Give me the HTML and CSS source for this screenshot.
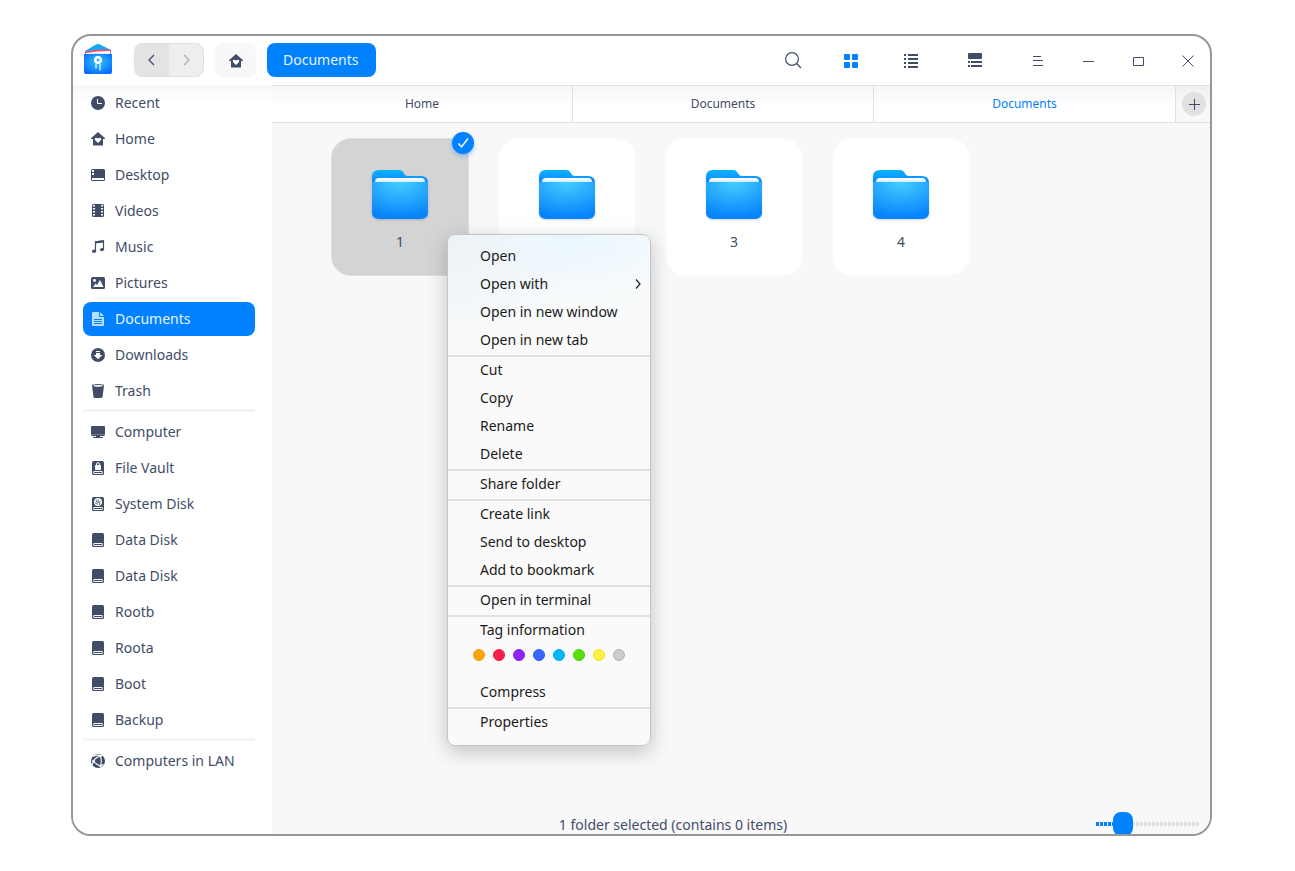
FILE: index.html
```html
<!DOCTYPE html>
<html lang="en">
<head>
<meta charset="utf-8">
<title>Documents</title>
<link rel="stylesheet" href="styles.css">
</head>
<body>
<svg class="defs" aria-hidden="true">
  <defs>
    <linearGradient id="folder-back" x1="0" y1="0" x2="0" y2="1">
      <stop offset="0" stop-color="#0ab2ff"/><stop offset=".25" stop-color="#0f88f8"/><stop offset="1" stop-color="#0a84ff"/>
    </linearGradient>
    <radialGradient id="folder-front" cx=".5" cy="0" r="1">
      <stop offset="0" stop-color="#46cdff"/><stop offset="1" stop-color="#0583fb"/>
    </radialGradient>
    <linearGradient id="paper" x1="0" y1="0" x2="0" y2="1">
      <stop offset="0" stop-color="#fff"/><stop offset="1" stop-color="#c4e8fd"/>
    </linearGradient>
    <radialGradient id="logo-front" cx=".5" cy=".4" r=".75">
      <stop offset="0" stop-color="#2fc4ff"/><stop offset="1" stop-color="#0060ff"/>
    </radialGradient>
    <symbol id="folder" viewBox="0 0 58 52">
      <path d="M1 8q0-7 7-7h20q3 0 4 2l2 3q1 1 3 1h13q7 0 7 7v29q0 7-7 7H8q-7 0-7-7z" fill="url(#folder-back)"/>
      <path d="M4 14v-1q0-4 4-4h42q4 0 4 4v1z" fill="url(#paper)"/>
      <path d="M1 13h56v29q0 7-7 7H8q-7 0-7-7z" fill="url(#folder-front)"/>
    </symbol>
    <symbol id="home" viewBox="0 0 16 16">
      <path d="M8 1l7 6.200V8h-2v6.500H3V8H1v-.8z" fill="currentColor"/>
      <path d="M8 12L5.200 9.200C4.200 8 5 6.700 6.200 6.700c.8 0 1.400.4 1.800 1 .4-.6 1-1 1.800-1 1.200 0 2 1.300 1 2.500z" fill="#fff"/>
    </symbol>
    <symbol id="disk" viewBox="0 0 16 16">
      <rect x="2" y="1" width="12" height="14" rx="1.500" fill="currentColor"/>
      <rect x="3.500" y="11.500" width="9" height="2" rx=".6" fill="none" stroke="#fff"/>
    </symbol>
  </defs>
</svg>

<div class="window">
  <header class="titlebar">
    <svg class="logo" viewBox="0 0 28 32" aria-hidden="true">
      <path d="M1 8L12 1.500q2-1 4 0L27 7v8H1z" fill="#14a9f5"/>
      <path d="M1 8.500Q13 6 26 6.500l1 4H1z" fill="#ff4d67"/>
      <path d="M2 10q12-2 24-2v4H2z" fill="#fff"/>
      <path d="M0 11q14-.5 28 0v18q0 2-2 2H2q-2 0-2-2z" fill="url(#logo-front)"/>
      <circle cx="14" cy="17" r="2.700" fill="#27b4ff" stroke="#fff" stroke-width="2.600"/>
      <path d="M12 21v4.500M16 21v6.500" stroke="#fff" stroke-width="1.200"/>
    </svg>
    <div class="history">
      <button class="history-button is-enabled" type="button" aria-label="Back"><svg width="16" height="16" viewBox="0 0 16 16"><path d="M10 3L5 8l5 5"/></svg></button>
      <button class="history-button" type="button" aria-label="Forward"><svg width="16" height="16" viewBox="0 0 16 16"><path d="M6 3l5 5-5 5"/></svg></button>
    </div>
    <button class="home-button" type="button" aria-label="Home"><svg width="16" height="16"><use href="#home"/></svg></button>
    <button class="crumb" type="button">Documents</button>
    <div class="tools">
      <button class="tool search" type="button" aria-label="Search"><svg width="18" height="18" viewBox="0 0 18 18" fill="none" stroke="currentColor" stroke-width="1.200"><circle cx="8" cy="7" r="6.400"/><path d="M12.500 11.500l4.500 4.500"/></svg></button>
      <button class="tool is-active" type="button" aria-label="Icon view"><svg width="14" height="14" viewBox="0 0 14 14" fill="currentColor"><rect width="6" height="6" rx="1"/><rect x="8" width="6" height="6" rx="1"/><rect y="8" width="6" height="6" rx="1"/><rect x="8" y="8" width="6" height="6" rx="1"/></svg></button>
      <button class="tool list" type="button" aria-label="List view"><svg width="14" height="14" viewBox="0 0 14 14" fill="currentColor"><path d="M0 0h2v2H0zM4 0h10v2H4zM0 4h2v2H0zM4 4h10v2H4zM0 8h2v2H0zM4 8h10v2H4zM0 12h2v2H0zM4 12h10v2H4z"/></svg></button>
      <button class="tool" type="button" aria-label="Details"><svg width="14" height="16" viewBox="0 0 14 16" fill="currentColor"><rect width="14" height="6" rx="1"/><path d="M0 8h2v2H0zM3 8h11v2H3zM0 12h2v2H0zM3 12h11v2H3z"/></svg></button>
    </div>
    <div class="controls">
      <button class="control" type="button" aria-label="Menu"><svg width="10" height="10" viewBox="0 0 10 10"><path d="M0 .5h8M0 4.500h10M0 9.500h10"/></svg></button>
      <button class="control" type="button" aria-label="Minimize"><svg width="11" height="11" viewBox="0 0 11 11"><path d="M0 5.500h11"/></svg></button>
      <button class="control" type="button" aria-label="Maximize"><svg width="11" height="9" viewBox="0 0 11 9"><path d="M.5.500h10v8H.5z"/></svg></button>
      <button class="control" type="button" aria-label="Close"><svg width="12" height="12" viewBox="0 0 12 12"><path d="M.5.500l11 11M11.500.500l-11 11"/></svg></button>
    </div>
  </header>

  <div class="body">
    <nav class="sidebar" aria-label="Places">
      <a class="place" href="#recent"><svg viewBox="0 0 16 16"><circle cx="8" cy="8" r="7" fill="currentColor"/><path d="M7.500 4v4.500H12" fill="none" stroke="#fff"/></svg>Recent</a>
      <a class="place" href="#home-folder"><svg viewBox="0 0 16 16"><use href="#home"/></svg>Home</a>
      <a class="place" href="#desktop"><svg viewBox="0 0 16 16"><rect x="1" y="2" width="14" height="12" rx="1.500" fill="currentColor"/><path d="M2 11h12v2H2zM2 3h2v2H2zM2 6h2v2H2z" fill="#fff"/></svg>Desktop</a>
      <a class="place" href="#videos"><svg viewBox="0 0 16 16"><rect x="2" y="1" width="12" height="13" rx="1.500" fill="currentColor"/><path d="M4 2v12M12 2v12" stroke="#fff" stroke-width="2" stroke-dasharray="1.600 1.400"/></svg>Videos</a>
      <a class="place" href="#music"><svg viewBox="0 0 16 16"><path d="M5.500 12V2.800L13.500 2v8.500" fill="none" stroke="currentColor" stroke-width="1.200"/><path d="M5 2.200l9-1v2.300l-9 1z" fill="currentColor"/><ellipse cx="4" cy="12.300" rx="2" ry="1.700" fill="currentColor"/><ellipse cx="12" cy="10.600" rx="2" ry="1.700" fill="currentColor"/></svg>Music</a>
      <a class="place" href="#pictures"><svg viewBox="0 0 16 16"><rect x="1" y="2" width="14" height="12" rx="1.500" fill="currentColor"/><circle cx="4.500" cy="5.500" r="1.400" fill="#fff"/><path d="M3 12l2.500-3.500L7 10l3-5 3.500 7z" fill="#fff"/></svg>Pictures</a>
      <a class="place is-current" href="#documents" aria-current="page"><svg viewBox="0 0 16 16"><path d="M3 1h6v5h5v8q0 1-1 1H3q-1 0-1-1V2q0-1 1-1zM10 1l4 4h-4z" fill="#b9dcff"/><path d="M4 8.500h8M4 10.500h8M4 12.500h8" stroke="#0081ff"/></svg>Documents</a>
      <a class="place" href="#downloads"><svg viewBox="0 0 16 16"><circle cx="8" cy="8" r="7" fill="currentColor"/><path d="M6 4h4v1H6zM6 6h4v2h2.300L8 12.300 3.700 8H6z" fill="#fff"/></svg>Downloads</a>
      <a class="place" href="#trash"><svg viewBox="0 0 16 16"><path d="M2 2.500Q2 1 8 1t6 1.500L12.500 14q-.2 1-1.500 1H5q-1.300 0-1.500-1z" fill="currentColor"/><ellipse cx="8" cy="2.800" rx="4.800" ry=".9" fill="#fff"/></svg>Trash</a>
      <hr class="rule">
      <a class="place" href="#computer"><svg viewBox="0 0 16 16"><path d="M2 2h12q1 0 1 1v7H1V3q0-1 1-1zM1 10.300h14q0 1.700-1 1.700H2q-1 0-1-1.700zM6 12h4v1H6z" fill="currentColor"/><path d="M3 13.500h10" stroke="currentColor"/></svg>Computer</a>
      <a class="place" href="#vault"><svg viewBox="0 0 16 16"><use href="#disk"/><rect x="5" y="5" width="6" height="5" rx=".6" fill="#fff"/><path d="M6.500 5.500V4q0-1.300 1.500-1.300T9.500 4v1.500" fill="none" stroke="#fff"/></svg>File Vault</a>
      <a class="place" href="#system"><svg viewBox="0 0 16 16"><use href="#disk"/><circle cx="8" cy="6" r="4" fill="#fff"/><path d="M6 3.500q0 3 2.200 3.200t1.500 2.500M8.500 3q-1.200 2 0 3t2.500-.7M5 7q2-.5 2.500 1.800" fill="none" stroke="currentColor" stroke-width=".8"/></svg>System Disk</a>
      <a class="place" href="#data1"><svg viewBox="0 0 16 16"><use href="#disk"/></svg>Data Disk</a>
      <a class="place" href="#data2"><svg viewBox="0 0 16 16"><use href="#disk"/></svg>Data Disk</a>
      <a class="place" href="#rootb"><svg viewBox="0 0 16 16"><use href="#disk"/></svg>Rootb</a>
      <a class="place" href="#roota"><svg viewBox="0 0 16 16"><use href="#disk"/></svg>Roota</a>
      <a class="place" href="#boot"><svg viewBox="0 0 16 16"><use href="#disk"/></svg>Boot</a>
      <a class="place" href="#backup"><svg viewBox="0 0 16 16"><use href="#disk"/></svg>Backup</a>
      <hr class="rule">
      <a class="place" href="#lan"><svg viewBox="0 0 16 16"><circle cx="8" cy="8" r="7" fill="currentColor"/><path d="M10.500 3Q6 4 3.500 8q2.500 3.500 7 5M3 3.500Q7 1 10.500 3q1.500 5 0 10M2 12l1.500-4M10.500 3L13 2M10.500 13l3-1.500" fill="none" stroke="#fff" stroke-width="1.100"/><circle cx="3.500" cy="8" r="1.300" fill="#fff"/><circle cx="10.500" cy="3" r="1.200" fill="#fff"/><circle cx="10.500" cy="13" r="1.200" fill="#fff"/></svg>Computers in LAN</a>
    </nav>

    <main class="content">
      <div class="tabbar">
        <div class="tabs" role="tablist">
          <button class="tab" type="button" role="tab" aria-selected="false">Home</button>
          <button class="tab" type="button" role="tab" aria-selected="false">Documents</button>
          <button class="tab is-selected" type="button" role="tab" aria-selected="true">Documents</button>
        </div>
        <div class="tab-add">
          <button class="add-button" type="button" aria-label="New tab"><svg width="11" height="11" viewBox="0 0 11 11"><path d="M0 5.500h11M5.500 0v11"/></svg></button>
        </div>
      </div>

      <div class="files">
        <button class="file is-selected" type="button">
          <svg class="file-icon" viewBox="0 0 58 52"><use href="#folder"/></svg>1
          <svg class="check" viewBox="0 0 22 22"><circle cx="11" cy="11" r="11" fill="#0081ff"/><path d="M6.500 11.500l3 3.500 6.500-8.500" fill="none" stroke="#fff" stroke-width="1.400"/></svg>
        </button>
        <button class="file" type="button"><svg class="file-icon" viewBox="0 0 58 52"><use href="#folder"/></svg>2</button>
        <button class="file" type="button"><svg class="file-icon" viewBox="0 0 58 52"><use href="#folder"/></svg>3</button>
        <button class="file" type="button"><svg class="file-icon" viewBox="0 0 58 52"><use href="#folder"/></svg>4</button>
      </div>

      <footer class="status">
        <span class="status-text">1 folder selected (contains 0 items)</span>
        <input class="zoom" type="range" min="0" max="100" value="20" aria-label="Icon size">
      </footer>

      <div class="menu" role="menu">
        <button class="menu-item" type="button" role="menuitem">Open</button>
        <button class="menu-item" type="button" role="menuitem">Open with<svg class="arrow" width="6" height="10" viewBox="0 0 6 10"><path d="M1 .5L5 5 1 9.500"/></svg></button>
        <button class="menu-item" type="button" role="menuitem">Open in new window</button>
        <button class="menu-item" type="button" role="menuitem">Open in new tab</button>
        <hr class="menu-rule">
        <button class="menu-item" type="button" role="menuitem">Cut</button>
        <button class="menu-item" type="button" role="menuitem">Copy</button>
        <button class="menu-item" type="button" role="menuitem">Rename</button>
        <button class="menu-item" type="button" role="menuitem">Delete</button>
        <hr class="menu-rule">
        <button class="menu-item" type="button" role="menuitem">Share folder</button>
        <hr class="menu-rule">
        <button class="menu-item" type="button" role="menuitem">Create link</button>
        <button class="menu-item" type="button" role="menuitem">Send to desktop</button>
        <button class="menu-item" type="button" role="menuitem">Add to bookmark</button>
        <hr class="menu-rule">
        <button class="menu-item" type="button" role="menuitem">Open in terminal</button>
        <hr class="menu-rule">
        <button class="menu-item" type="button" role="menuitem">Tag information</button>
        <div class="tags">
          <button class="tag orange" type="button" aria-label="Orange"></button>
          <button class="tag red" type="button" aria-label="Red"></button>
          <button class="tag purple" type="button" aria-label="Purple"></button>
          <button class="tag navy" type="button" aria-label="Navy blue"></button>
          <button class="tag azure" type="button" aria-label="Azure"></button>
          <button class="tag green" type="button" aria-label="Green"></button>
          <button class="tag yellow" type="button" aria-label="Yellow"></button>
          <button class="tag gray" type="button" aria-label="Gray"></button>
        </div>
        <button class="menu-item" type="button" role="menuitem">Compress</button>
        <hr class="menu-rule">
        <button class="menu-item" type="button" role="menuitem">Properties</button>
      </div>
    </main>
  </div>
</div>
</body>
</html>
```
FILE: styles.css
```css
* { box-sizing: border-box; }

body {
  margin: 0;
  min-height: 100vh;
  padding: 34px 83px 35px 71px;
  display: flex;
  background: #fff;
  color: #414d68;
  font: 14px/20px "Noto Sans", sans-serif;
}

button {
  margin: 0;
  padding: 0;
  border: 0;
  background: none;
  color: inherit;
  font: inherit;
}

svg { display: block; flex: none; }

.defs { position: absolute; width: 0; height: 0; }

.window {
  flex: 1;
  min-width: 0;
  display: flex;
  flex-direction: column;
  border: 2px solid #979797;
  border-radius: 20px;
  background: #fff;
  overflow: hidden;
}

/* Title bar */
.titlebar {
  height: 49px;
  display: flex;
  align-items: flex-start;
  padding: 7px 0 0 11px;
}

.logo { width: 28px; height: 32px; margin-right: 22px; }

.history {
  display: flex;
  border: 1px solid #e0e0e0;
  border-radius: 8px;
  overflow: hidden;
  background: #eee;
}

.history-button {
  width: 34px;
  height: 32px;
  display: grid;
  place-items: center;
  color: #a9aeba;
}

.history-button.is-enabled { background: #e3e3e3; color: #414d68; }

.history-button svg { fill: none; stroke: currentColor; stroke-width: 1.3; }

.home-button {
  width: 41px;
  height: 35px;
  margin: 0 11px;
  display: grid;
  place-items: center;
  border-radius: 8px;
  background: #f8f8f8;
}

.crumb {
  height: 34px;
  padding: 0 18px 0 16px;
  border-radius: 8px;
  background: #0081ff;
  color: #e6f3ff;
}

.tools { margin-left: auto; display: flex; }

.tool { width: 36px; height: 36px; display: grid; place-items: center; }

.tool.search { margin-right: 22px; }

.tool.list { margin: 0 28px 0 24px; }

.tool.is-active { color: #0081ff; }

.controls { display: flex; gap: 4px; margin-left: 22px; }

.control { width: 46px; height: 36px; display: grid; place-items: center; }

.control:last-child { width: 45px; }

.control svg, .add-button svg { fill: none; stroke: currentColor; }

/* Sidebar */
.body { flex: 1; display: flex; }

.sidebar {
  width: 199px;
  padding: 1px 17px 16px 10px;
  background: linear-gradient(#f7f7f7, #fff 16px);
}

.place {
  height: 34px;
  margin-bottom: 2px;
  padding-left: 7px;
  display: flex;
  align-items: center;
  gap: 9px;
  border-radius: 8px;
  color: inherit;
  text-decoration: none;
  white-space: nowrap;
}

.place svg { width: 16px; height: 16px; }

.place.is-current { background: #0081ff; color: #e6f3ff; }

.rule { height: 3px; margin: -1px 0 3px; border: 0; background: #f4f4f4; }

/* Content */
.content {
  position: relative;
  flex: 1;
  min-width: 0;
  display: flex;
  flex-direction: column;
  background: #f8f8f8;
}

.tabbar {
  height: 38px;
  display: flex;
  border-top: 1px solid #e1e1e1;
  border-bottom: 1px solid #e1e1e1;
  font-size: 12px;
}

.tabs {
  flex: 1;
  display: grid;
  grid-template-columns: repeat(3, 1fr);
  background: linear-gradient(#f6f6f6, #fff 20px);
}

.tab { border-right: 1px solid #e1e1e1; }

.tab:last-child { border-right: 0; }

.tab.is-selected { color: #0081ff; }

.tab-add {
  width: 35px;
  display: grid;
  place-items: center end;
  padding-right: 4px;
  border-left: 1px solid #e1e1e1;
  background: linear-gradient(#f0f0f0, #f8f8f8 20px);
}

.add-button {
  width: 24px;
  height: 24px;
  display: grid;
  place-items: center;
  border-radius: 50%;
  background: #e1e1e1;
}

.files {
  flex: 1;
  display: flex;
  flex-wrap: wrap;
  align-content: flex-start;
  gap: 29px;
  padding: 15px 59px;
}

.file {
  position: relative;
  width: 138px;
  height: 138px;
  display: flex;
  flex-direction: column;
  align-items: center;
  padding-top: 30px;
  gap: 11px;
  border: 1px solid #fbfbfb;
  border-radius: 20px;
  background: #fff;
}

.file.is-selected { border-color: #dedede; background: #d4d4d4; }

.file-icon { width: 58px; height: 52px; filter: drop-shadow(0 1px 1px rgba(0, 40, 120, .2)); }

.check {
  position: absolute;
  top: -7px;
  right: -6px;
  width: 22px;
  height: 22px;
  overflow: visible;
  filter: drop-shadow(0 2px 2px rgba(0, 129, 255, .4));
}

.status { height: 20px; display: flex; align-items: center; }

.status-text { flex: 1; padding-top: 2px; text-align: center; }

.zoom {
  appearance: none;
  width: 103px;
  height: 24px;
  margin: 0 11px 0 22px;
  background: transparent;
}

.zoom::-webkit-slider-runnable-track {
  height: 4px;
  background:
    repeating-linear-gradient(90deg, transparent 0 3px, #f8f8f8 3px 4px),
    linear-gradient(90deg, #0081ff 20%, #e0e0e0 20%);
}

.zoom::-webkit-slider-thumb {
  appearance: none;
  width: 20px;
  height: 24px;
  margin-top: -10px;
  border-radius: 8px;
  background: #0081ff;
}

/* Context menu */
.menu {
  position: absolute;
  top: 149px;
  left: 175px;
  width: 204px;
  padding: 8px 0;
  border: 1px solid #c4c4c4;
  border-radius: 8px;
  background:
    radial-gradient(ellipse 110px 60px at 60% 0, #e9f6fe, rgba(250, 250, 250, 0)),
    radial-gradient(ellipse 130px 110px at 0 0, #edf2f5, rgba(250, 250, 250, 0)),
    linear-gradient(#f5fafd, #fafafa 110px);
  color: #1a1a1a;
  box-shadow: 0 6px 20px rgba(0, 0, 0, .22);
}

.menu-item {
  width: 100%;
  height: 28px;
  padding: 0 9px 2px 32px;
  display: flex;
  align-items: center;
  justify-content: space-between;
}

.arrow { fill: none; stroke: currentColor; stroke-width: 1.2; }

.menu-rule { height: 2px; margin: 0; border: 0; background: #e1e1e1; }

.tags { height: 34px; display: flex; gap: 8px; padding: 4px 25px 0; }

.tag { width: 12px; height: 12px; border: 1px solid; border-radius: 50%; }

.orange { background: #ffa503; border-color: #f39b10; }
.red { background: #ff1c49; border-color: #ee1b44; }
.purple { background: #9023fc; border-color: #8420e8; }
.navy { background: #3468ff; border-color: #2d5fea; }
.azure { background: #00b5ff; border-color: #09abee; }
.green { background: #58df0a; border-color: #51cc0b; }
.yellow { background: #fef144; border-color: #f0df28; }
.gray { background: #ccc; border-color: #b3b3b3; }
```
